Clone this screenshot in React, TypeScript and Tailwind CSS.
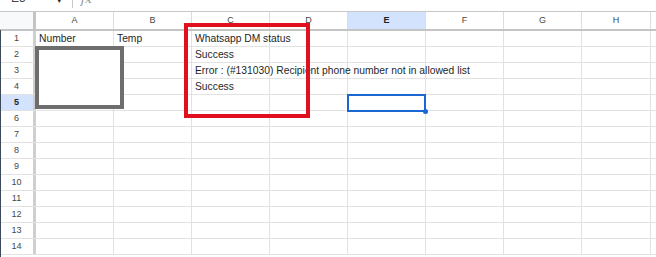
import React from 'react';

const cols = ['A', 'B', 'C', 'D', 'E', 'F', 'G', 'H'];

const cellText: Record<string, string> = {
  '1-A': 'Number',
  '1-B': 'Temp',
  '1-C': 'Whatsapp DM status',
  '2-C': 'Success',
  '3-C': 'Error : (#131030) Recipient phone number not in allowed list',
  '4-C': 'Success',
};

const colWidth = (c: string) => (c === 'H' ? 'w-[69px]' : 'w-[78px]');

export default function App() {
  const rows = Array.from({ length: 14 }, (_, i) => i + 1);

  return (
    <div
      className="relative w-[656px] h-[257px] overflow-hidden bg-white text-[#1f1f1f]"
      style={{ fontFamily: '"Liberation Sans", Arial, sans-serif' }}
    >
      {/* formula bar, cut off at the top of the shot */}
      <div className="flex h-[12px] border-b border-[#c7c7c7] overflow-hidden">
        <span className="ml-[11px] -mt-[8px] text-[12px] leading-[12px] text-[#444746]">E5</span>
        <span className="ml-[30px] -mt-[3px] text-[7px] leading-[7px] text-[#1f1f1f]">▼</span>
        <div className="ml-[9px] h-[8px] w-px bg-[#c7c7c7]" />
        <span
          className="ml-[8px] -mt-[7px] text-[12px] leading-[12px] italic text-[#8a8f94]"
          style={{ fontFamily: '"DejaVu Serif", serif' }}
        >
          fx
        </span>
      </div>

      {/* column headers */}
      <div className="flex h-[19px] border-b-2 border-[#c4c4c4] text-[9px] text-[#444746]">
        <div className="w-[36px] shrink-0 bg-[#f8f9fa] border-r-[3px] border-[#c4c4c4]" />
        {cols.map((c) => (
          <div
            key={c}
            className={`${colWidth(c)} shrink-0 flex items-center justify-center border-r border-[#dcdcdc] ${
              c === 'E' ? 'bg-[#d3e3fd] font-bold text-[#1f1f1f]' : 'bg-white'
            }`}
          >
            {c}
          </div>
        ))}
      </div>

      {/* rows */}
      {rows.map((r) => (
        <div key={r} className="flex h-[16px] border-b border-[#e2e2e2]">
          <div
            className={`w-[36px] shrink-0 flex items-center justify-center border-r-[3px] border-[#cfcfcf] text-[9px] ${
              r === 5 ? 'bg-[#d3e3fd] font-bold text-[#1f1f1f]' : 'bg-white text-[#444746]'
            }`}
          >
            {r}
          </div>
          {cols.map((c) => {
            const t = cellText[`${r}-${c}`];
            return (
              <div
                key={c}
                className={`${colWidth(c)} shrink-0 flex items-center border-r border-[#e2e2e2] pl-[3px] pt-[1px] text-[10.3px] whitespace-nowrap overflow-visible`}
              >
                {t && <span className="relative z-10">{t}</span>}
              </div>
            );
          })}
        </div>
      ))}

      {/* left edge strip */}
      <div className="absolute left-0 top-[30px] bottom-0 w-px bg-[#3c4a5c]" />

      {/* grey drawn box over A2:A5 */}
      <div className="absolute left-[35px] top-[46px] w-[89px] h-[63px] border-4 border-[#6e6e6e] bg-white z-20" />

      {/* red highlight box */}
      <div className="absolute left-[184px] top-[23px] w-[126px] h-[95px] border-4 border-[#e0101e] z-30" />

      {/* selected cell E5 */}
      <div className="absolute left-[347px] top-[94px] w-[79px] h-[18px] border-2 border-[#1a66d2] z-20" />
      <div className="absolute left-[423px] top-[109px] w-[5px] h-[5px] rounded-full bg-[#1a66d2] z-20" />
    </div>
  );
}
